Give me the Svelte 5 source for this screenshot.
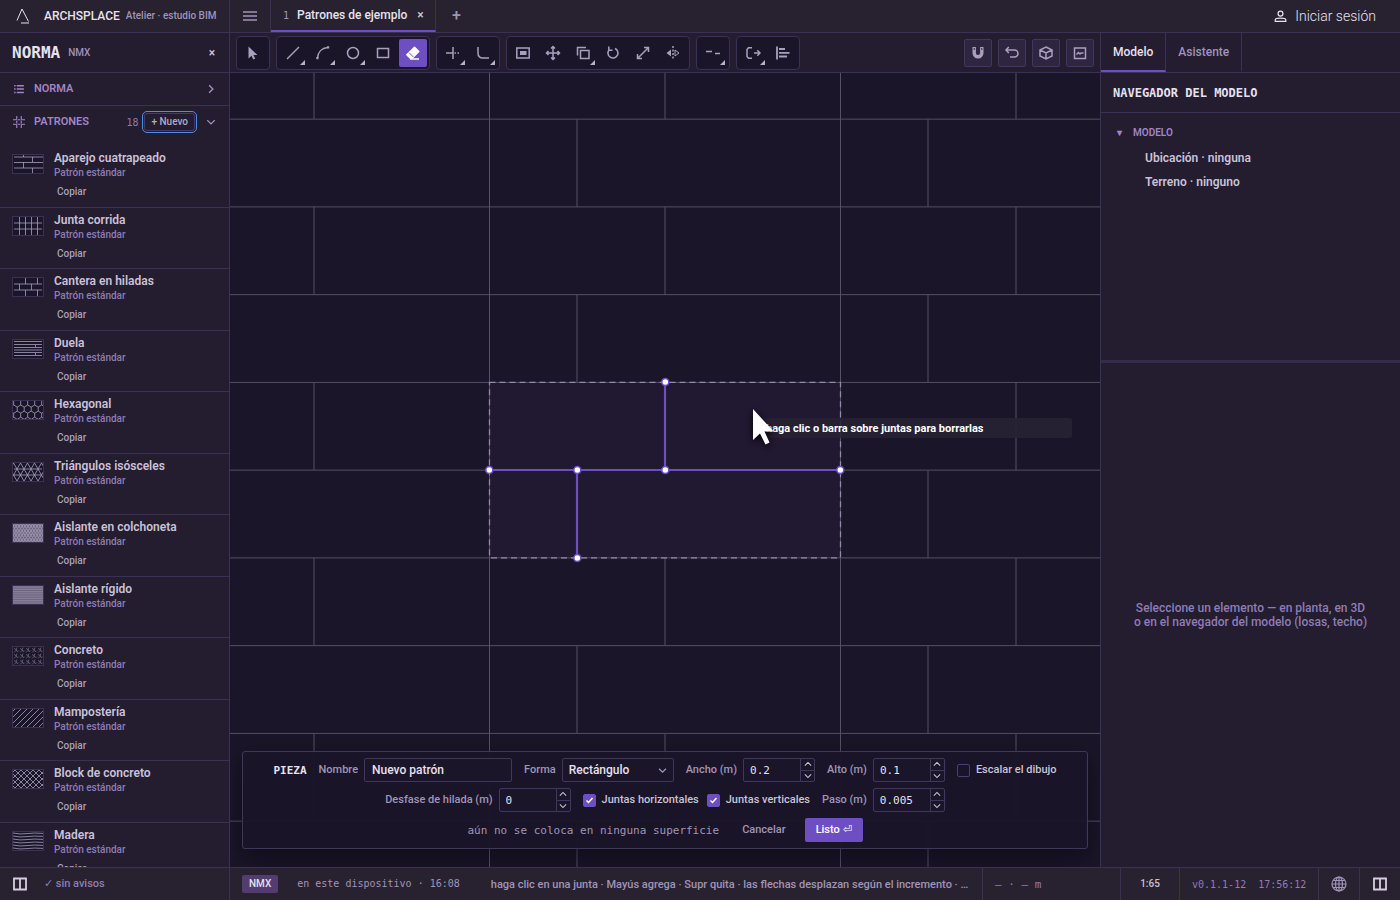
<script>
  const lines = (list) => list.map(([x1, y1, x2, y2]) => `M${x1} ${y1}L${x2} ${y2}`).join('');
  const range = (n) => Array.from({ length: n }, (_, i) => i);
  const zigzag = (y, h, step, x0 = -2) =>
    `M${x0} ${y}` + range(Math.ceil(36 / step)).map((i) => `l${step} ${i % 2 ? h : -h}`).join('');

  const hexRow = (y, x0) =>
    range(6).map((i) => `M${x0 + i * 7} ${y}v4l3.500 2.100l3.500 -2.100`).join('');
  const star = (x, y) => `M${x} ${y}l2 1M${x + 3} ${y - 1}l-1 3l2 1M${x} ${y + 4}l2 -2M${x + 4} ${y + 3}l1 -1`;
  const diag = (step, from, to) => range(Math.ceil((to - from) / step)).map((i) => `M${from + i * step} 20l20 -20`).join('');
  const back = (step, from, to) => range(Math.ceil((to - from) / step)).map((i) => `M${from + i * step} 0l20 20`).join('');

  const patterns = [
    { name: 'Aparejo cuatrapeado', d: lines([[2, 3, 31, 3], [2, 8.5, 31, 8.5], [2, 14, 31, 14], [11.5, 1, 11.5, 3], [11.5, 8, 11.5, 14], [20.5, 3, 20.5, 8], [20.5, 14, 20.5, 19]]) },
    { name: 'Junta corrida', d: lines([[2, 7, 30, 7], [2, 13, 30, 13], [7.5, 1, 7.5, 19], [13.5, 1, 13.5, 19], [19.5, 1, 19.5, 19], [25.5, 1, 25.5, 19]]) },
    { name: 'Cantera en hiladas', d: lines([[2, 7, 30, 7], [2, 13, 30, 13], [13.5, 1, 13.5, 7], [25.5, 1, 25.5, 7], [7.5, 7, 7.5, 13], [19.5, 7, 19.5, 13], [13.5, 13, 13.5, 19], [25.5, 13, 25.5, 19]]) },
    { name: 'Duela', d: lines([[2, 2.5, 30, 2.5], [2, 5.5, 30, 5.5], [2, 8.5, 30, 8.5], [2, 11, 30, 11], [2, 13.5, 30, 13.5], [2, 16.5, 30, 16.5], [23.5, 6, 23.5, 8], [23.5, 14, 23.5, 16]]) },
    { name: 'Hexagonal', d: hexRow(1, -5.3) + hexRow(7.1, -1.8) + hexRow(13.2, -5.3) },
    { name: 'Triángulos isósceles', d: zigzag(7, 6, 3.5) + zigzag(7, -6, 3.5) + zigzag(19, 6, 3.5) + 'M2 7H30M2 13H30' },
    { name: 'Aislante en colchoneta', d: range(4).map((i) => zigzag(5.5 + i * 4.5, 4.5, 1.5) + zigzag(1 + i * 4.5, -4.5, 1.5)).join('') },
    { name: 'Aislante rígido', d: range(4).map((i) => zigzag(5.5 + i * 4.5, 4.5, 2) + zigzag(1 + i * 4.5, -4.5, 2)).join('') },
    { name: 'Concreto', soft: true, d: range(5).flatMap((i) => range(3).map((j) => star(2 + i * 6, 2.5 + j * 6))).join('') },
    { name: 'Mampostería', d: diag(6, -16, 32) },
    { name: 'Block de concreto', d: diag(6, -16, 32) + back(6, -16, 32) },
    { name: 'Madera', d: range(6).map((i) => `M1 ${2 + i * 3}q7 1.6 14 .6t16 -.2`).join('') }
  ];

  const toolGroups = [
    [{ icon: 'select', label: 'Seleccionar' }],
    [
      { icon: 'line', label: 'Línea', more: true },
      { icon: 'arc', label: 'Arco', more: true },
      { icon: 'circle', label: 'Círculo', more: true },
      { icon: 'rect', label: 'Rectángulo' },
      { icon: 'erase', label: 'Borrar', active: true }
    ],
    [
      { icon: 'trim', label: 'Recortar', more: true },
      { icon: 'fillet', label: 'Empalmar', more: true }
    ],
    [
      { icon: 'offset', label: 'Desfase' },
      { icon: 'move', label: 'Mover' },
      { icon: 'copy', label: 'Copiar', more: true },
      { icon: 'rotate', label: 'Girar' },
      { icon: 'scale', label: 'Escalar' },
      { icon: 'mirror', label: 'Reflejar' }
    ],
    [{ icon: 'split', label: 'Partir', more: true }],
    [
      { icon: 'extend', label: 'Extender', more: true },
      { icon: 'align', label: 'Alinear' }
    ]
  ];
  const viewTools = [
    { icon: 'magnet', label: 'Imán' },
    { icon: 'undo', label: 'Deshacer' },
    { icon: 'cube', label: 'Vista 3D' },
    { icon: 'image', label: 'Imagen' }
  ];

  const icons = {
    select: '<path fill="currentColor" stroke="none" d="M3.5 1.5v12l3-2.7 1.8 3.7 1.9-.9-1.8-3.6h4z"/>',
    line: '<path d="M2 14L14 2"/>',
    arc: '<path d="M2.5 13C3 7 7 3 12.500 2.500"/><path fill="currentColor" stroke="none" d="M1.300 12h2.200v2.200H1.300zM12 1.300h2.200v2.200H12z"/>',
    circle: '<circle cx="8" cy="8" r="5.500"/>',
    rect: '<path d="M2.500 3.500h11v9h-11z"/>',
    erase: '<path fill="currentColor" d="M9.500 2.200l4.300 4.300-6.500 6.500H5L1.800 9.800z" stroke-linejoin="round"/><path stroke="#6d4fc3" stroke-width="1" d="M4.200 7.800l4 4"/><path d="M5 14h9"/>',
    trim: '<path d="M1 8h7M8 2v12"/><path stroke-dasharray="1.500 1.500" d="M9.500 8H15"/>',
    fillet: '<path d="M3 2v6q0 5 5 5h6"/>',
    offset: '<path d="M1.800 3h12.400v10H1.800z"/><path fill="currentColor" stroke="none" d="M5 6h6.500v4H5z"/>',
    move: '<path d="M8 1.500v13M1.500 8h13M6 3.500L8 1.500 10 3.500M6 12.500L8 14.500 10 12.500M3.500 6L1.500 8 3.500 10M12.500 6L14.500 8 12.500 10"/>',
    copy: '<path d="M5.500 5.500h8.500v8H5.500zM11 2.500H2.500v8"/>',
    rotate: '<path d="M4 5a5 5 0 1 0 6-1.500M3.800 1.500V5.300H7.500"/>',
    scale: '<path d="M3 13L13.500 2.500M9 2.500h4.500V7M2.500 9v4.500H7"/>',
    mirror: '<path stroke-dasharray="2 1.500" d="M8 1v14"/><path fill="currentColor" stroke="none" d="M6 4.500v7L1.500 8z"/><path stroke-width="1" d="M10 5v6l4-3z"/>',
    split: '<path d="M1 6.500h6M10 8.500h5"/>',
    extend: '<path d="M7 2.800H3.500L2 4.500v7l1.500 1.700H7M9 8h6M12.300 5.300L15 8l-2.700 2.700"/>',
    align: '<path d="M2 1.500v13M4 4h6M4 7.800h10.500M4 11.500h8" stroke-width="1.800"/>',
    magnet: '<path stroke-width="3.400" d="M4.200 2v6a3.800 3.800 0 0 0 7.600 0V2"/><path stroke="#2e2540" stroke-width="1" d="M4.200 3v2M11.800 3v2"/>',
    undo: '<path d="M2 5h8.500a3.500 3.500 0 0 1 0 7H6M4.800 2L2 5l2.800 3"/>',
    cube: '<path d="M8 2l6 3v6l-6 3-6-3V5zM2 5l6 3 6-3M8 8v6"/>',
    image: '<path d="M2.500 3h11v10.500h-11z"/><path d="M4.500 9.500l2-2 1.500 1.500 1-1h2.500"/>',
    bars: '<path d="M1 4h14M1 8h14M1 12h14"/>',
    list: '<path d="M5 3.500h9.500M5 8h9.500M5 12.500h9.500M1.500 3.500h2M1.500 8h2M1.500 12.500h2" stroke-width="2"/>',
    hash: '<path d="M5 0v3q0 2-2 2H0M11 0v3q0 2 2 2h3M5 16v-3q0-2-2-2H0M11 16v-3q0-2 2-2h3M6 5h4M6 11h4M5 6v4M11 6v4"/>',
    right: '<path d="M5.500 3l5 5-5 5" stroke-width="1.800"/>',
    down: '<path d="M3 5.500l5 5 5-5" stroke-width="1.800"/>',
    up: '<path d="M3 10.500l5-5 5 5" stroke-width="1.800"/>',
    user: '<circle cx="8" cy="4.500" r="3"/><path d="M1.500 14v-2q0-2 6.500-2t6.500 2v2z"/>',
    panes: '<path d="M2 2.500h12v11H2zM8 2v12" stroke-width="1.800"/>',
    globe: '<circle cx="8" cy="8" r="7"/><path d="M8 1v14M1 8h14M2.200 4.500h11.600M2.200 11.500h11.600"/><ellipse cx="8" cy="8" rx="3.500" ry="7"/>'
  };

  const courses = range(24).map((i) => ({ y: 46.15 + i * 87.75, odd: i % 2 === 0 }));
  const nodes = [[435, 309], [259, 397], [347, 397], [435, 397], [610, 397], [347, 485]];

  let nombre = $state('Nuevo patrón');
  let ancho = $state('0.2');
  let alto = $state('0.1');
  let desfase = $state('0');
  let paso = $state('0.005');
  let escalar = $state(false);
  let horizontales = $state(true);
  let verticales = $state(true);
</script>

{#snippet glyph(name, cls = '')}
  <svg class="glyph {cls}" viewBox="0 0 16 16" aria-hidden="true">{@html icons[name]}</svg>
{/snippet}

{#snippet tool(t, cls)}
  <button class={cls} class:active={t.active} aria-label={t.label}>
    {@render glyph(t.icon)}
    {#if t.more}<span class="more"></span>{/if}
  </button>
{/snippet}

{#snippet stepper()}
  <span class="steps">
    <button type="button" aria-label="Aumentar">{@render glyph('up')}</button>
    <button type="button" aria-label="Disminuir">{@render glyph('down')}</button>
  </span>
{/snippet}

<div class="app">
  <header>
    <div class="brand">
      <svg class="logo" viewBox="0 0 16 16" aria-hidden="true"><path d="M1 12.500L6 1l6.500 12.500M5 15h8" /></svg>
      <strong>ARCHSPLACE</strong><span>Atelier · estudio BIM</span>
    </div>
    <button class="menu" aria-label="Menú">{@render glyph('bars')}</button>
    <div class="doc">
      <span class="num">1</span><span class="title">Patrones de ejemplo</span>
      <button aria-label="Cerrar pestaña">×</button>
    </div>
    <button class="plus" aria-label="Nueva pestaña">+</button>
    <button class="login">{@render glyph('user')}Iniciar sesión</button>
  </header>

  <main>
    <aside class="left">
      <div class="norm"><h1>NORMA</h1><span>NMX</span><button aria-label="Cerrar panel">×</button></div>
      <button class="section">{@render glyph('list')}<b>NORMA</b>{@render glyph('right', 'end')}</button>
      <div class="section open">
        {@render glyph('hash')}<b>PATRONES</b><span class="count">18</span>
        <button class="new">+ Nuevo</button>
        <button class="fold" aria-label="Contraer">{@render glyph('down')}</button>
      </div>
      <ul>
        {#each patterns as p}
          <li>
            <svg class="thumb" class:faint={p.soft} viewBox="0 0 32 20" aria-hidden="true">
              <path d={p.d} /><rect x="0.500" y="0.500" width="31" height="19" />
            </svg>
            <div>
              <h2>{p.name}</h2>
              <p>Patrón estándar</p>
              <button>Copiar</button>
            </div>
          </li>
        {/each}
      </ul>
    </aside>

    <section class="center">
      <div class="toolbar">
        {#each toolGroups as group}
          <div class="group">
            {#each group as t}{@render tool(t, 'tool')}{/each}
          </div>
        {/each}
        <div class="views">
          {#each viewTools as t}{@render tool(t, 'view')}{/each}
        </div>
      </div>

      <div class="stage">
        <svg class="drawing" aria-hidden="true">
          <rect class="tile" x="259.500" y="309.500" width="351" height="175.500" />
          <g class="grid">
            {#each courses as row}
              <path d="M0 {row.y}H4000" />
              {#each range(12) as c}
                <path d="M{(row.odd ? 347 : 435) - 351 + c * 351} {row.y}v87.750" />
              {/each}
            {/each}
            {#each range(12) as c}
              <path d="M{84 + c * 351} 0V46" />
            {/each}
            <path class="seam" d="M259.500 0V2000M610.500 0V2000" />
          </g>
          <rect class="bounds" x="259.500" y="309.300" width="351" height="175.500" />
          <path class="joint" d="M259.500 397H610.500M435 309V397M347 397V485" />
          {#each nodes as [x, y]}<circle cx={x + 0.3} cy={y} r="3.500" />{/each}
        </svg>
        <div class="tip">haga clic o barra sobre juntas para borrarlas</div>
        <svg class="pointer" viewBox="0 0 30 42" aria-hidden="true"><path d="M3 2v31l7-6.500 5.500 11 4-2-5-11h9z" /></svg>

        <form class="piece" onsubmit={(e) => e.preventDefault()}>
          <div class="row">
            <b>PIEZA</b>
            <label>Nombre <input class="name" bind:value={nombre} /></label>
            <label>Forma
              <span class="choice"><select><option>Rectángulo</option></select>{@render glyph('down')}</span>
            </label>
            <div class="field"><label for="ancho">Ancho (m)</label><span class="number"><input id="ancho" bind:value={ancho} />{@render stepper()}</span></div>
            <div class="field"><label for="alto">Alto (m)</label><span class="number"><input id="alto" bind:value={alto} />{@render stepper()}</span></div>
            <label class="check"><input type="checkbox" bind:checked={escalar} />Escalar el dibujo</label>
          </div>
          <div class="row">
            <div class="field"><label for="desfase">Desfase de hilada (m)</label><span class="number"><input id="desfase" bind:value={desfase} />{@render stepper()}</span></div>
            <div class="pair">
              <label class="check"><input type="checkbox" bind:checked={horizontales} />Juntas horizontales</label>
              <label class="check"><input type="checkbox" bind:checked={verticales} />Juntas verticales</label>
            </div>
            <div class="field"><label for="paso">Paso (m)</label><span class="number"><input id="paso" bind:value={paso} />{@render stepper()}</span></div>
          </div>
          <div class="row">
            <span class="note">aún no se coloca en ninguna superficie</span>
            <div class="pair">
              <button type="button">Cancelar</button>
              <button class="primary">Listo ⏎</button>
            </div>
          </div>
        </form>
      </div>
    </section>

    <aside class="right">
      <nav><button class="on">Modelo</button><button>Asistente</button></nav>
      <h3>NAVEGADOR DEL MODELO</h3>
      <div class="tree">
        <div class="root"><span>▾</span>MODELO</div>
        <div class="leaf">Ubicación · ninguna</div>
        <div class="leaf">Terreno · ninguno</div>
      </div>
      <div class="empty">Seleccione un elemento — en planta, en 3D o en el navegador del modelo (losas, techo)</div>
    </aside>
  </main>

  <footer>
    <div class="status">
      <button aria-label="Panel izquierdo">{@render glyph('panes')}</button><span>✓ sin avisos</span>
    </div>
    <span class="badge">NMX</span>
    <span class="device">en este dispositivo · 16:08</span>
    <span class="hint">haga clic en una junta · Mayús agrega · Supr quita · las flechas desplazan según el incremento · …</span>
    <span class="coords">– · – m</span>
    <span class="ratio">1:65</span>
    <span class="version"><span>v0.1.1-12</span><span>17:56:12</span></span>
    <button class="world" aria-label="Idioma">{@render glyph('globe')}</button>
    <button class="panes" aria-label="Panel derecho">{@render glyph('panes')}</button>
  </footer>
</div>

<style>
  :global(body) { margin: 0; background: #1a1528; }
  .app {
    --line: #3b3156;
    --bar: #28212f;
    --panel: #241c2f;
    --deep: #1a1528;
    --accent: #6d4fc3;
    --text: #e6e1ef;
    --soft: #c9c2d8;
    --muted: #a094b8;
    --violet: #8e7db4;
    --mono: "DejaVu Sans Mono", monospace;
    display: grid;
    grid-template-rows: 33px minmax(0, 1fr) 33px;
    grid-template-columns: minmax(0, 1fr);
    height: 100vh;
    overflow: hidden;
    color: var(--soft);
    font: 500 12px/16px Roboto, sans-serif;
  }
  * { box-sizing: border-box; }
  button, input, select { margin: 0; padding: 0; border: 0; background: none; color: inherit; font: inherit; }
  h1, h2, h3, p, ul { margin: 0; padding: 0; list-style: none; font-weight: 500; }
  .glyph { display: block; flex: none; width: 16px; height: 16px; fill: none; stroke: currentColor; stroke-width: 1.500; }

  header, footer { display: flex; align-items: stretch; background: var(--bar); }
  header { border-bottom: 1px solid var(--line); }
  .brand { display: flex; align-items: center; gap: 6px; width: 230px; padding-left: 16px; border-right: 1px solid var(--line); white-space: nowrap; color: var(--muted); font-size: 10px; }
  .brand strong { font-size: 12px; font-weight: 500; color: var(--text); }
  .logo { width: 16px; height: 16px; margin-right: 6px; fill: none; stroke: var(--text); stroke-width: 1; }
  .menu { display: flex; align-items: center; justify-content: center; width: 41px; border-right: 1px solid var(--line); color: var(--muted); }
  .doc { display: flex; align-items: center; padding: 0 8px 0 12px; border-right: 1px solid var(--line); border-bottom: 2px solid var(--accent); }
  .num { margin-right: 8px; font: 10px var(--mono); color: var(--muted); }
  .title { color: var(--text); }
  .doc button { width: 14px; margin-left: 6px; color: var(--soft); }
  .plus { width: 40px; font-size: 16px; color: var(--muted); }
  .login { display: flex; align-items: center; gap: 8px; margin-left: auto; padding-right: 24px; font-size: 14px; font-weight: 300; color: var(--text); }
  .login .glyph { width: 13px; height: 13px; }

  main { display: grid; grid-template-columns: 230px minmax(0, 1fr) 300px; min-height: 0; }
  .left { display: flex; flex-direction: column; min-height: 0; overflow: hidden; border-right: 1px solid var(--line); background: var(--panel); }
  .norm { display: flex; flex: none; align-items: center; height: 40px; padding: 0 10px 0 12px; border-bottom: 1px solid var(--line); font-size: 10px; color: var(--muted); }
  .norm h1 { margin-right: 8px; font: bold 16px var(--mono); color: var(--text); }
  .norm button { width: 14px; margin-left: auto; font-size: 12px; color: var(--soft); }
  .section { display: flex; flex: none; align-items: center; height: 33px; padding: 0 12px; border-bottom: 1px solid var(--line); color: #a085c8; font-size: 11px; text-align: left; }
  .section b { margin-left: 9px; font-weight: 600; }
  .section > .glyph { width: 12px; height: 12px; margin-left: 1px; }
  .section > .end { margin-left: auto; color: var(--muted); }
  .section.open { height: 32px; border: 0; margin-bottom: 8px; }
  .count { margin: 0 6px 0 auto; font: 10px var(--mono); color: var(--violet); }
  .new { height: 18px; padding: 0 6px; border: 1px solid #453a66; border-radius: 3px; outline: 1px solid #4a90e2; outline-offset: 1px; font-size: 10px; line-height: 16px; color: #b3a9c4; }
  .fold { margin-left: 10px; color: var(--muted); }
  .fold .glyph { width: 12px; height: 12px; }
  li { display: flex; gap: 10px; padding: 5px 12px 6px; border-bottom: 1px solid var(--line); }
  .thumb { flex: none; width: 32px; height: 20px; margin-top: 3px; background: var(--deep); fill: none; stroke: #a89fbd; stroke-width: 0.800; }
  .faint { stroke-width: 0.500; }
  .thumb rect { stroke: #3b3156; stroke-width: 1; }
  h2 { font-size: 12px; font-weight: 600; line-height: 15px; }
  li p { font-size: 10px; line-height: 14px; color: var(--violet); }
  li button { display: block; margin-top: 4px; padding: 0 3px; font-size: 10px; line-height: 1.650; color: #a99fbb; }

  .center { display: flex; flex-direction: column; min-width: 0; }
  .toolbar { display: flex; flex: none; gap: 6px; height: 40px; padding: 3px 6px 2px; border-bottom: 1px solid var(--line); background: var(--panel); color: #aaa0be; }
  .group { display: flex; gap: 2px; padding: 2px; border: 1px solid var(--line); border-radius: 4px; background: var(--deep); }
  .tool, .view { position: relative; display: flex; align-items: center; justify-content: center; width: 28px; height: 28px; border-radius: 2px; }
  .active { background: var(--accent); color: #fff; }
  .more { position: absolute; right: 2px; bottom: 2px; border-left: 5px solid transparent; border-bottom: 5px solid #b9b0cb; }
  .views { display: flex; align-items: center; gap: 6px; margin-left: auto; }
  .view { border: 1px solid #41365f; background: #2e2540; }

  .stage { position: relative; display: flex; flex: 1; flex-direction: column; justify-content: flex-end; min-height: 0; padding: 0 12px 18px; overflow: hidden; background: var(--deep); }
  .drawing { position: absolute; inset: 0; width: 100%; height: 100%; }
  .tile { fill: #211831; }
  .grid path { fill: none; stroke: #565066; stroke-width: 1; }
  .grid .seam { stroke: #575069; }
  .bounds { fill: none; stroke: #9288aa; stroke-width: 1.300; stroke-dasharray: 6 4; }
  .joint { fill: none; stroke: var(--accent); stroke-width: 2.200; }
  .drawing circle { fill: #fff; stroke: var(--accent); stroke-width: 1.500; }
  .tip { position: absolute; left: 527px; top: 345px; width: 315px; height: 20px; padding: 0 9px; border-radius: 3px; background: #282134e6; font-size: 11px; font-weight: 700; line-height: 22px; color: #fff; }
  .pointer { position: absolute; left: 520px; top: 334px; width: 30px; height: 42px; fill: #fff; filter: drop-shadow(0 2px 3px #000); }

  .piece { position: relative; display: flex; flex-direction: column; gap: 6px; padding: 6px; border: 1px solid #41375e; border-radius: 3px; background: #1a1528f7; box-shadow: 0 8px 24px #0006; font-size: 11px; color: var(--muted); }
  .row { display: flex; align-items: center; justify-content: center; gap: 12px; height: 24px; white-space: nowrap; }
  .row > b { font: bold 11px var(--mono); color: var(--text); }
  .row label, .field { display: flex; align-items: center; gap: 6px; }
  .pair { display: flex; gap: 8px; }
  .name, .choice, .number { height: 24px; border: 1px solid #41375e; border-radius: 2px; background: var(--deep); color: var(--text); }
  .name { width: 148px; padding: 0 7px; font-size: 12px; }
  .choice { display: flex; align-items: center; width: 112px; padding-right: 5px; font-size: 12px; }
  .choice select { flex: 1; min-width: 0; padding-left: 6px; appearance: none; outline: 0; }
  .choice .glyph { width: 11px; height: 11px; color: var(--muted); }
  .number { display: flex; width: 72px; }
  .number input { flex: 1; min-width: 0; padding-left: 6px; font: 11px var(--mono); outline: 0; }
  .steps { display: flex; flex-direction: column; width: 14px; border-left: 1px solid #41375e; color: var(--soft); }
  .steps button { display: flex; flex: 1; align-items: center; justify-content: center; }
  .steps button + button { border-top: 1px solid #41375e; }
  .steps .glyph { width: 10px; height: 10px; }
  .row .check { color: var(--soft); }
  .check input { width: 13px; height: 13px; appearance: none; border: 1px solid #4b3f6b; border-radius: 2px; }
  .check input:checked { border-color: var(--accent); background: var(--accent) url("data:image/svg+xml,%3Csvg xmlns='http://www.w3.org/2000/svg' viewBox='0 0 11 11'%3E%3Cpath d='M2.500 5.500l2 2 4-4.500' fill='none' stroke='white' stroke-width='1.500'/%3E%3C/svg%3E"); }
  .note { font: 11px var(--mono); }
  .pair button { height: 24px; padding: 0 11px; border-radius: 2px; }
  .pair .primary { background: var(--accent); color: #fff; }

  .right { display: flex; flex-direction: column; border-left: 1px solid var(--line); background: var(--panel); }
  nav { display: flex; flex: none; height: 40px; border-bottom: 1px solid var(--line); }
  nav button { padding: 0 12px; border-right: 1px solid var(--line); border-bottom: 2px solid transparent; color: var(--muted); }
  nav .on { border-bottom-color: var(--accent); color: var(--text); }
  h3 { flex: none; height: 40px; padding-left: 12px; border-bottom: 1px solid var(--line); font: bold 12px/40px var(--mono); color: var(--text); }
  .tree { flex: none; height: 250px; padding: 8px 12px; border-bottom: 3px solid #352b4a; }
  .root { display: flex; gap: 7px; height: 24px; padding-left: 4px; font-size: 10px; font-weight: 600; line-height: 24px; color: #a085c8; }
  .root span { width: 9px; }
  .leaf { height: 24px; padding-left: 32px; font-weight: 600; line-height: 26px; }
  .empty { display: flex; flex: 1; align-items: center; padding: 0 32px; text-align: center; line-height: 14px; color: var(--violet); }

  footer { border-top: 1px solid var(--line); line-height: 34px; color: var(--muted); white-space: nowrap; }
  .status { display: flex; flex: none; align-items: center; gap: 16px; width: 230px; padding-left: 12px; border-right: 1px solid var(--line); font-size: 11px; color: var(--violet); }
  .status button, .panes { color: #d5cee2; }
  .badge { align-self: center; height: 18px; margin: 0 19px 0 12px; padding: 0 7px; border-radius: 2px; background: #523d6e; font-size: 10px; line-height: 18px; color: var(--text); }
  .device { margin-right: 31px; font: 10px/32px var(--mono); }
  .hint { flex: 1; min-width: 0; padding-right: 8px; overflow: hidden; text-overflow: ellipsis; font-size: 11px; }
  .coords { width: 138px; padding-left: 12px; border-left: 1px solid var(--line); font: 11px/34px var(--mono); color: var(--violet); }
  .ratio { width: 59px; border-left: 1px solid var(--line); font-size: 10px; line-height: 32px; text-align: center; color: var(--soft); }
  .version { display: flex; gap: 12px; width: 139px; padding-left: 12px; border-left: 1px solid var(--line); font: 10px/34px var(--mono); color: var(--violet); }
  .world, .panes { display: flex; align-items: center; justify-content: center; width: 41px; border-left: 1px solid var(--line); }
  .world .glyph { stroke-width: 1.200; }
</style>
